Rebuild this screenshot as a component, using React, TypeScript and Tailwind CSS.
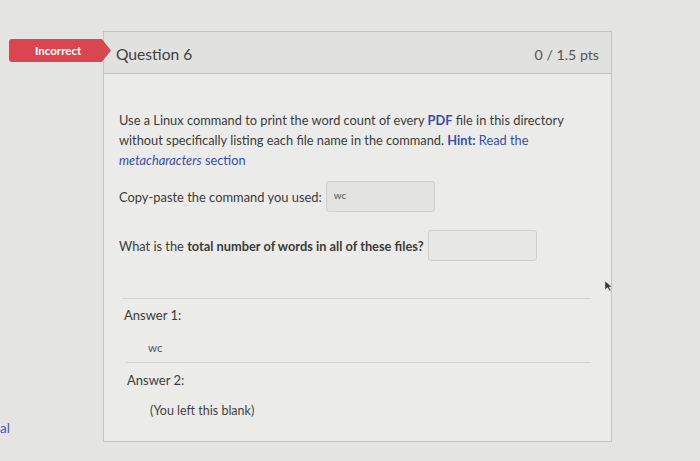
const App = () => {
  return (
    <div className="relative w-[700px] h-[461px] overflow-hidden bg-[#e4e4e2] pt-[31px] pl-[103px] font-['Lato','Noto_Sans',sans-serif] text-[#3b3b3b]">
      {/* Incorrect badge */}
      <div className="absolute left-[9px] top-[39px] w-[102px] h-[23px] bg-[#d9464f] rounded-l-[3px] [clip-path:polygon(0_0,91%_0,100%_50%,91%_100%,0_100%)] flex items-center pl-[26px] text-white text-[11.5px] font-bold">
        Incorrect
      </div>

      <div className="w-[509px] h-[411px] border border-[#c4c4c2] bg-[#ebebe9]">
        <div className="h-[42px] flex items-center justify-between pl-[12px] pr-[12px] pt-[4px] bg-[#e1e1df] border-b border-[#c4c4c2]">
          <span className="text-[15.6px] text-[#3f3f3f]">Question 6</span>
          <span className="text-[14.2px] text-[#555555]">0 / 1.5 pts</span>
        </div>

        <div className="pt-[36px] pl-[15px] pr-[20px]">
          <p className="text-[12.8px] leading-[20px] whitespace-nowrap">
            Use a Linux command to print the word count of every{" "}
            <span className="font-bold text-[#3a4da3]">PDF</span> file in this directory
            <br />
            without specifically listing each file name in the command.{" "}
            <span className="text-[#3a4da3]">
              <span className="font-bold">Hint:</span> Read the
              <br />
              <span className="italic">metacharacters</span> section
            </span>
          </p>

          <div className="mt-[11px] flex items-center gap-[4px] text-[12.9px]">
            <span className="pt-[3px]">Copy-paste the command you used:</span>
            <div className="w-[109px] h-[31px] border border-[#cfcfcd] rounded-[3px] bg-[#e3e3e1] pl-[7px] pt-[6px] text-[10px] text-[#555]">
              wc
            </div>
          </div>

          <div className="mt-[18px] flex items-center gap-[4px] text-[12.8px]">
            <span className="pt-[3px]">
              What is the <span className="font-bold">total number of words in all of these files?</span>
            </span>
            <div className="w-[109px] h-[31px] border border-[#cfcfcd] rounded-[3px] bg-[#e7e7e5]"></div>
          </div>

          <div className="mt-[37px] ml-[4px] mr-[0px] border-t border-[#d4d4d2]"></div>
          <div className="ml-[5px] mt-[6px] text-[13px] leading-[20px]">Answer 1:</div>
          <div className="ml-[29px] mt-[15px] text-[11.5px] leading-[16px] text-[#555]">wc</div>
          <div className="mt-[6px] ml-[7px] border-t border-[#d4d4d2]"></div>
          <div className="ml-[8px] mt-[7px] text-[13px] leading-[20px]">Answer 2:</div>
          <div className="ml-[31px] mt-[11px] text-[12.5px] leading-[20px] text-[#444]">(You left this blank)</div>
        </div>
      </div>

      {/* mouse cursor */}
      <svg className="absolute left-[604px] top-[280px]" width="9" height="12" viewBox="0 0 9 12">
        <path d="M1 1 L1 10 L3.5 7.5 L5.5 11 L7 10.3 L5 7 L8 7 Z" fill="#333" stroke="#ddd" strokeWidth="0.6" />
      </svg>

      <div className="absolute left-[0px] top-[418px] text-[13.5px] text-[#4656b3]">al</div>
    </div>
  );
};

export default App;
